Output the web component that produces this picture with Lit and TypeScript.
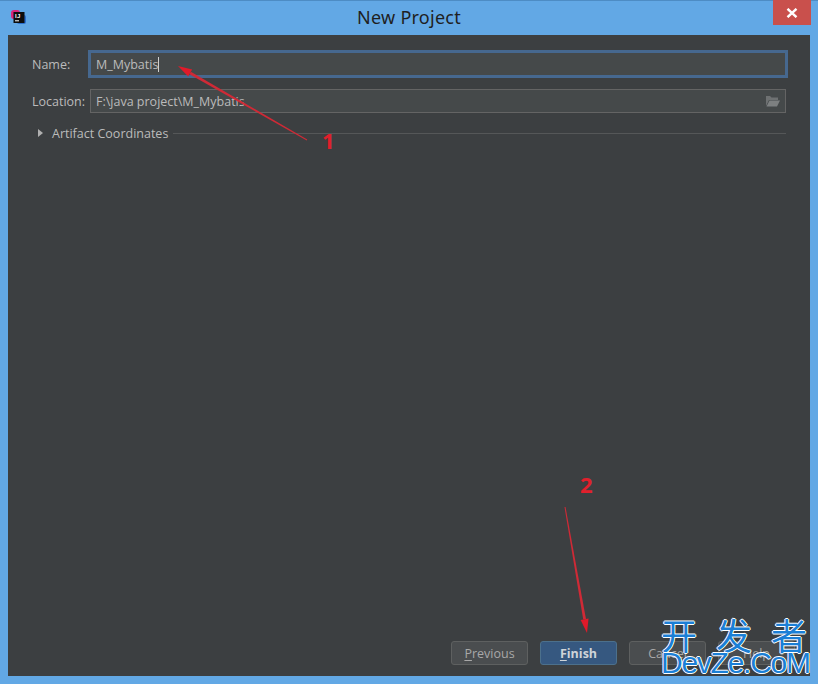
import { LitElement, html, css, svg } from "lit";
import { customElement } from "lit/decorators.js";

@customElement("app-root")
export class AppRoot extends LitElement {
  static styles = css`
    :host { display: block; width: 818px; height: 684px; position: relative; overflow: hidden; font-family: "Open Sans", "Noto Sans", sans-serif; }
    .win { box-sizing: border-box; width: 818px; height: 684px; background: #62a8e5; display: flex; flex-direction: column; padding: 0 8px 8px; border-top: 1px solid #4d8cc4; }
    .title { height: 34px; flex: none; display: flex; align-items: center; position: relative; justify-content: center; color: #1f1f1f; font: 18px "Noto Sans", "Open Sans", sans-serif; letter-spacing: .25px; padding-bottom: 2px; box-sizing: border-box; }
    .logo { position: absolute; left: 2px; top: 8px; width: 16px; height: 16px; }
    .close { position: absolute; right: -1px; top: -1px; width: 38px; height: 25px; background: #c9504c; display: flex; align-items: center; justify-content: center; }
    .body { flex: 1; background: #3c3f41; display: flex; flex-direction: column; padding: 17px 24px 11px; color: #bbbbbb; font-size: 12.5px; }
    .row { display: flex; align-items: center; height: 24px; }
    .row + .row { margin-top: 13px; }
    .lab { width: 58px; flex: none; }
    .input { flex: 1; box-sizing: border-box; height: 24px; border: 1px solid #646464; background: #45494a; display: flex; align-items: center; padding: 0 5px; }
    .focus { box-shadow: 0 0 0 2px #46688f; border-color: #46688f; }
    .caret { width: 1px; height: 15px; background: #d0d0d0; }
    .spacer { flex: 1; }
    .art { display: flex; align-items: center; height: 18px; margin-top: 11px; padding-left: 6px; }
    .tri { width: 0; height: 0; border-left: 5px solid #b0b0b0; border-top: 4px solid transparent; border-bottom: 4px solid transparent; margin-right: 9px; }
    .line { flex: 1; height: 1px; background: #555758; margin-left: 5px; }
    .fill { flex: 1; }
    .btns { display: flex; justify-content: flex-end; gap: 12px; margin-right: -9px; }
    .btn { box-sizing: border-box; width: 77px; height: 24px; border: 1px solid #5e6060; border-radius: 3px; background: #4a4d4f; color: #a8a8a8; display: flex; align-items: center; justify-content: center; }
    .btn.pri { background: #365880; border-color: #4c708c; color: #cfd4d8; font-weight: 700; }
    u { text-underline-offset: 2px; }
    .over { position: absolute; left: 0; top: 0; width: 818px; height: 684px; pointer-events: none; }
    .num { position: absolute; color: #e0202c; font: 700 22px "Noto Sans", sans-serif; line-height: 1; }
    .n1 { left: 322px; top: 129px; }
    .n2 { left: 580px; top: 473px; }
    .arrows { position: absolute; left: 0; top: 0; }
    .wm1, .wm2 { position: absolute; color: #1b7fd6; text-shadow: 1px 0 #fff, -1px 0 #fff, 0 1px #fff, 0 -1px #fff; white-space: nowrap; }
    .wm1 { left: 661px; top: 616px; font: 36px/1 "Noto Sans CJK SC", sans-serif; letter-spacing: 19px; }
    .wm2 { left: 661px; top: 648px; font: 30px/1 "Liberation Sans", sans-serif; letter-spacing: -1.25px; }
  `;

  private arrow(x1: number, y1: number, x2: number, y2: number) {
    const a = Math.atan2(y2 - y1, x2 - x1);
    const len = 14, w = 4, t = 1.4, t0 = 0.5;
    const c = Math.cos(a), s = Math.sin(a);
    const bx = x2 - c * len, by = y2 - s * len;
    const nx = -s, ny = c;
    return svg`
      <polygon points="${x1 + nx * t0},${y1 + ny * t0} ${bx + nx * t},${by + ny * t} ${bx - nx * t},${by - ny * t} ${x1 - nx * t0},${y1 - ny * t0}" fill="#cf2a36"/>
      <polygon points="${x2},${y2} ${bx + nx * w},${by + ny * w} ${bx - nx * w},${by - ny * w}" fill="#e01a2a"/>`;
  }

  render() {
    return html`
      <div class="win">
        <div class="title">
          <svg class="logo" viewBox="0 0 16 16">
            <rect x="1" y="1" width="9" height="9" rx="3" fill="#d9257a"/>
            <rect x="7" y="6" width="9" height="9" rx="2" fill="#2a6fd0"/>
            <rect x="3.500" y="3" width="11" height="11" fill="#0d0d0d"/>
            <text x="5" y="9" font-family="Liberation Sans" font-size="6" font-weight="700" fill="#fff">IJ</text>
            <rect x="5" y="11.300" width="4" height="1" fill="#fff"/>
          </svg>
          New Project
          <div class="close">
            <svg width="12" height="10" viewBox="0 0 12 10"><path d="M1.500 .8L10.500 9.200M10.500 .8L1.500 9.200" stroke="#fff" stroke-width="2.400"/></svg>
          </div>
        </div>
        <div class="body">
          <div class="row"><span class="lab">Name:</span><div class="input focus">M_Mybatis<span class="caret"></span></div></div>
          <div class="row"><span class="lab">Location:</span><div class="input">F:\\java project\\M_Mybatis<span class="spacer"></span>
            <svg width="15" height="12" viewBox="0 0 15 12"><path d="M1 1h4l1.500 1.500H13V5H4L1 11z" fill="#6e7172"/><path d="M4.500 5.500H15L12 11.500H1.500z" fill="#7d8081"/></svg></div></div>
          <div class="art"><span class="tri"></span>Artifact Coordinates<span class="line"></span></div>
          <div class="fill"></div>
          <div class="btns">
            <div class="btn"><span><u>P</u>revious</span></div>
            <div class="btn pri"><span><u>F</u>inish</span></div>
            <div class="btn">Cancel</div>
            <div class="btn">Help</div>
          </div>
        </div>
      </div>
      <div class="over">
        <svg class="arrows" width="818" height="684">
          ${this.arrow(307, 140, 178, 66)}
          ${this.arrow(565, 507, 587, 633)}
        </svg>
        <span class="num n1">1</span>
        <span class="num n2">2</span>
        <span class="wm1">开发者</span>
        <span class="wm2">DevZe.CoM</span>
      </div>
    `;
  }
}
